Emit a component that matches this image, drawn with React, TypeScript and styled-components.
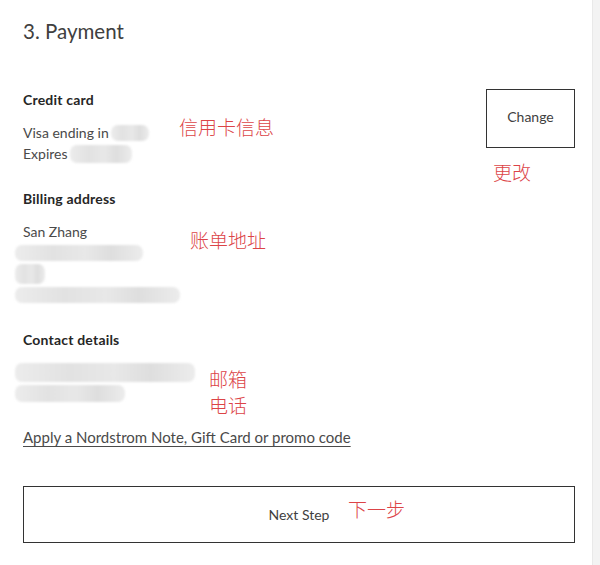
import React from "react";
import styled, { createGlobalStyle } from "styled-components";

const Global = createGlobalStyle`
  html, body { margin: 0; padding: 0; background: #fff; }
  body { font-family: Lato, "Open Sans", sans-serif; -webkit-font-smoothing: antialiased; }
`;

const Page = styled.div`
  display: flex;
  width: 600px;
  height: 565px;
  overflow: hidden;
  background: #fff;
`;

const Main = styled.main`
  flex: 1;
  padding: 19px 17px 0 23px;
  display: flex;
  flex-direction: column;
`;

const Scrollbar = styled.div`
  width: 7px;
  background: #f3f3f3;
  border-left: 1px solid #e9e9e9;
`;

const Title = styled.h2`
  margin: 0;
  font-size: 20.5px;
  line-height: 24px;
  font-weight: 400;
  color: #404040;
`;

const TopRow = styled.div`
  margin-top: 46px;
  display: flex;
  justify-content: space-between;
  align-items: flex-start;
`;

const Section = styled.section<{ $gap?: number }>`
  position: relative;
  margin-top: ${(p) => p.$gap ?? 0}px;
  display: flex;
  flex-direction: column;
`;

const Heading = styled.div`
  font-size: 14px;
  line-height: 21px;
  font-weight: 700;
  color: #262626;
  letter-spacing: 0.2px;
  margin-bottom: 12px;
`;

const Line = styled.div`
  font-size: 14px;
  line-height: 21px;
  color: #4a4a4a;
  display: flex;
  align-items: center;
  height: 21px;
`;

const Blur = styled.span<{ $w: number; $ml?: number; $h?: number }>`
  display: inline-block;
  width: ${(p) => p.$w}px;
  height: ${(p) => p.$h ?? 16}px;
  margin-left: ${(p) => p.$ml ?? 0}px;
  border-radius: 7px;
  background: linear-gradient(90deg, #ececec 0%, #e2e2e2 30%, #e8e8e8 55%, #dedede 75%, #ececec 100%);
  filter: blur(1.2px);
`;

const OutlineButton = styled.button<{ $w?: string; $h: number; $pb?: number }>`
  box-sizing: border-box;
  width: ${(p) => p.$w ?? "auto"};
  height: ${(p) => p.$h}px;
  background: #fff;
  border: 1px solid #333;
  border-radius: 0;
  font-family: Lato, "Open Sans", sans-serif;
  font-size: 14px;
  color: #3f3f3f;
  padding: 0 0 ${(p) => p.$pb ?? 0}px 0;
  position: relative;
  cursor: pointer;
`;

const Note = styled.span<{ $l: number; $t: number }>`
  position: absolute;
  left: ${(p) => p.$l}px;
  top: ${(p) => p.$t}px;
  font-family: "Noto Sans CJK SC", sans-serif;
  font-weight: 300;
  font-size: 19px;
  line-height: 19px;
  color: #dc4447;
  white-space: nowrap;
`;

const NoteStack = styled.span<{ $l: number; $t: number }>`
  position: absolute;
  left: ${(p) => p.$l}px;
  top: ${(p) => p.$t}px;
  display: flex;
  flex-direction: column;
  gap: 7px;
  font-family: "Noto Sans CJK SC", sans-serif;
  font-weight: 300;
  font-size: 19px;
  line-height: 19px;
  color: #dc4447;
`;

const PromoLink = styled.a`
  margin-top: 23px;
  font-size: 15px;
  line-height: 21px;
  color: #4a4a4a;
  text-decoration: underline;
  text-underline-offset: 3px;
  text-decoration-thickness: 1px;
  align-self: flex-start;
`;

const NextWrap = styled.div`
  margin-top: 38px;
`;

export default function App() {
  return (
    <Page>
      <Global />
      <Main>
        <Title>3. Payment</Title>
        <TopRow>
          <Section>
            <Heading>Credit card</Heading>
            <Line>
              Visa ending in
              <Blur $w={38} $ml={2} />
            </Line>
            <Line>
              Expires
              <Blur $w={62} $ml={2} $h={18} />
            </Line>
            <Note $l={156} $t={28}>信用卡信息</Note>
          </Section>
          <OutlineButton $w="89px" $h={59} $pb={5}>
            Change
            <Note $l={6} $t={72}>更改</Note>
          </OutlineButton>
        </TopRow>
        <Section $gap={24}>
          <Heading>Billing address</Heading>
          <Line>San Zhang</Line>
          <Line>
            <Blur $w={128} $ml={-8} />
          </Line>
          <Line>
            <Blur $w={30} $ml={-8} $h={20} />
          </Line>
          <Line>
            <Blur $w={165} $ml={-8} />
          </Line>
          <Note $l={167} $t={42}>账单地址</Note>
        </Section>
        <Section $gap={24}>
          <Heading>Contact details</Heading>
          <Line>
            <Blur $w={180} $ml={-8} $h={19} />
          </Line>
          <Line>
            <Blur $w={110} $ml={-8} $h={17} />
          </Line>
          <NoteStack $l={186} $t={40}>
            <span>邮箱</span>
            <span>电话</span>
          </NoteStack>
        </Section>
        <PromoLink href="#">Apply a Nordstrom Note, Gift Card or promo code</PromoLink>
        <NextWrap>
          <OutlineButton $w="100%" $h={57}>
            Next Step
            <Note $l={324} $t={12}>下一步</Note>
          </OutlineButton>
        </NextWrap>
      </Main>
      <Scrollbar />
    </Page>
  );
}
